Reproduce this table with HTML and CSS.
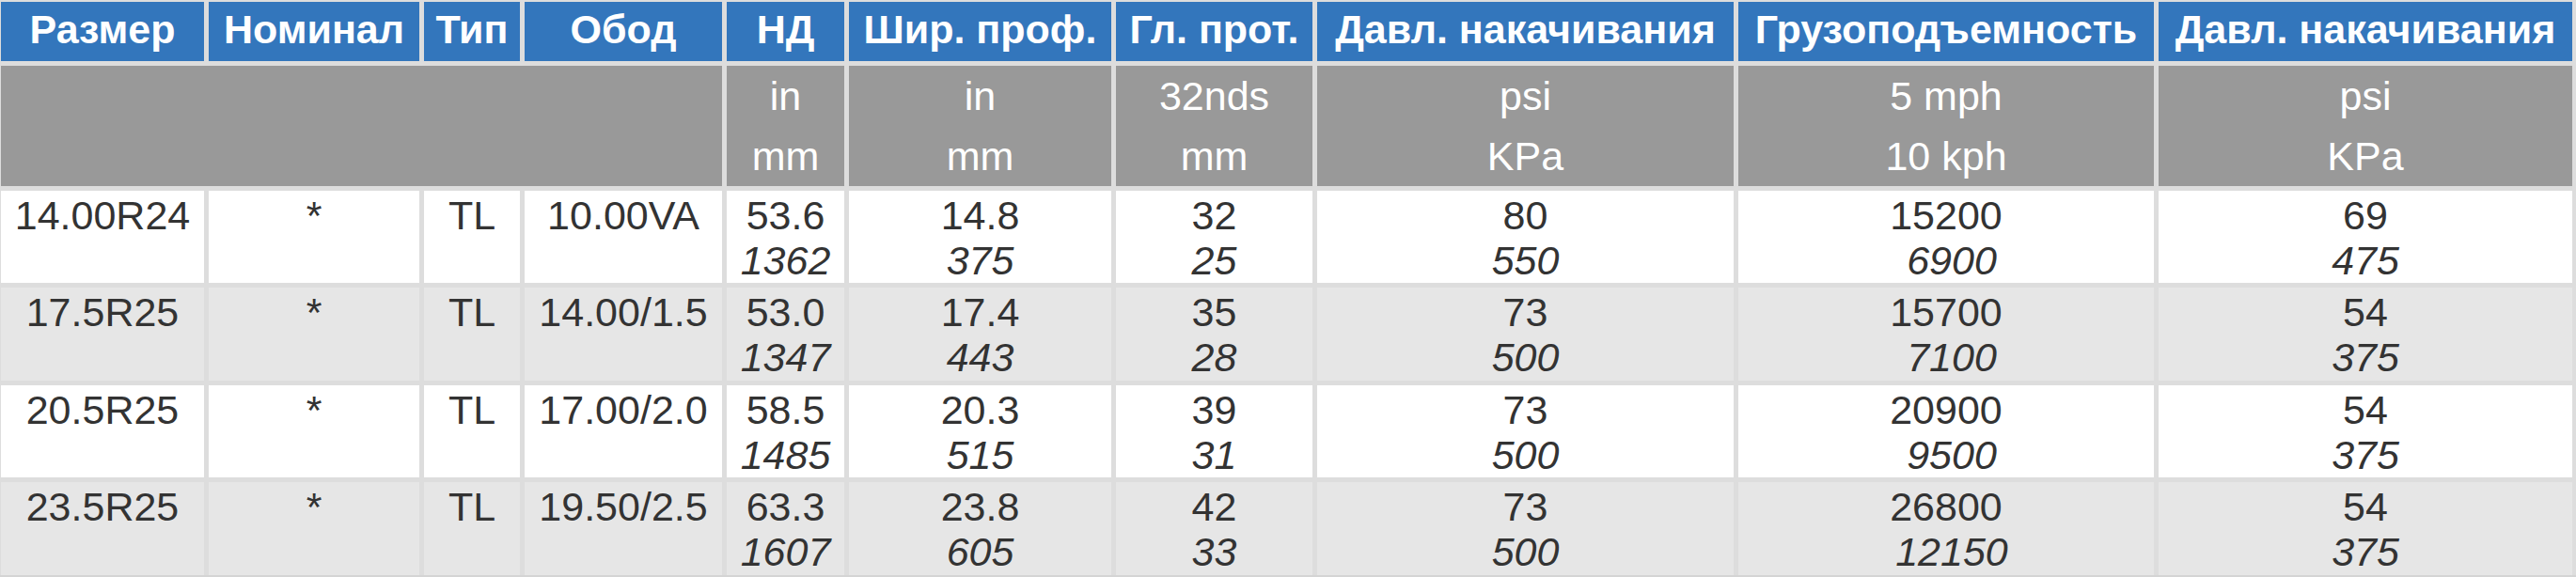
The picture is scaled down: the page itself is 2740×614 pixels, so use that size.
FILE: index.html
```html
<!DOCTYPE html>
<html lang="ru">
<head>
<meta charset="utf-8">
<title>Таблица шин</title>
<link rel="stylesheet" href="styles.css">
</head>
<body>
<div class="tbl" role="table">
  <div class="th" role="columnheader">Размер</div>
  <div class="th" role="columnheader">Номинал</div>
  <div class="th" role="columnheader">Тип</div>
  <div class="th" role="columnheader">Обод</div>
  <div class="th" role="columnheader">НД</div>
  <div class="th" role="columnheader">Шир. проф.</div>
  <div class="th" role="columnheader">Гл. прот.</div>
  <div class="th" role="columnheader">Давл. накачивания</div>
  <div class="th" role="columnheader">Грузоподъемность</div>
  <div class="th" role="columnheader">Давл. накачивания</div>

  <div class="unit span4"></div>
  <div class="unit"><span class="l">in</span><span class="l">mm</span></div>
  <div class="unit"><span class="l">in</span><span class="l">mm</span></div>
  <div class="unit"><span class="l">32nds</span><span class="l">mm</span></div>
  <div class="unit"><span class="l">psi</span><span class="l">KPa</span></div>
  <div class="unit"><span class="l">5 mph</span><span class="l">10 kph</span></div>
  <div class="unit"><span class="l">psi</span><span class="l">KPa</span></div>

  <div class="td">14.00R24</div>
  <div class="td">*</div>
  <div class="td">TL</div>
  <div class="td">10.00VA</div>
  <div class="td"><span class="v">53.6</span><span class="m">1362</span></div>
  <div class="td"><span class="v">14.8</span><span class="m">375</span></div>
  <div class="td"><span class="v">32</span><span class="m">25</span></div>
  <div class="td"><span class="v">80</span><span class="m">550</span></div>
  <div class="td"><span class="v">15200</span><span class="m">&nbsp;6900</span></div>
  <div class="td"><span class="v">69</span><span class="m">475</span></div>

  <div class="td alt">17.5R25</div>
  <div class="td alt">*</div>
  <div class="td alt">TL</div>
  <div class="td alt">14.00/1.5</div>
  <div class="td alt"><span class="v">53.0</span><span class="m">1347</span></div>
  <div class="td alt"><span class="v">17.4</span><span class="m">443</span></div>
  <div class="td alt"><span class="v">35</span><span class="m">28</span></div>
  <div class="td alt"><span class="v">73</span><span class="m">500</span></div>
  <div class="td alt"><span class="v">15700</span><span class="m">&nbsp;7100</span></div>
  <div class="td alt"><span class="v">54</span><span class="m">375</span></div>

  <div class="td">20.5R25</div>
  <div class="td">*</div>
  <div class="td">TL</div>
  <div class="td">17.00/2.0</div>
  <div class="td"><span class="v">58.5</span><span class="m">1485</span></div>
  <div class="td"><span class="v">20.3</span><span class="m">515</span></div>
  <div class="td"><span class="v">39</span><span class="m">31</span></div>
  <div class="td"><span class="v">73</span><span class="m">500</span></div>
  <div class="td"><span class="v">20900</span><span class="m">&nbsp;9500</span></div>
  <div class="td"><span class="v">54</span><span class="m">375</span></div>

  <div class="td alt">23.5R25</div>
  <div class="td alt">*</div>
  <div class="td alt">TL</div>
  <div class="td alt">19.50/2.5</div>
  <div class="td alt"><span class="v">63.3</span><span class="m">1607</span></div>
  <div class="td alt"><span class="v">23.8</span><span class="m">605</span></div>
  <div class="td alt"><span class="v">42</span><span class="m">33</span></div>
  <div class="td alt"><span class="v">73</span><span class="m">500</span></div>
  <div class="td alt"><span class="v">26800</span><span class="m">&nbsp;12150</span></div>
  <div class="td alt"><span class="v">54</span><span class="m">375</span></div>
</div>
</body>
</html>
```
FILE: styles.css
```css
html, body {
  margin: 0;
  padding: 0;
  background: #d4d4d4;
}

body {
  font-family: "Liberation Sans", Arial, sans-serif;
  width: 2740px;
  height: 614px;
  overflow: hidden;
}

.tbl {
  display: grid;
  grid-template-columns: 216px 224px 102px 210px 125px 279px 209px 443px 442px 440px;
  grid-template-rows: 63px 128px 98px 99px 98px 99px;
  gap: 5px;
  padding: 2px 4px 0 1px;
  background: #dddddd;
  height: 612px;
  box-sizing: border-box;
}

.th {
  background: #3376bc;
  color: #ffffff;
  font-weight: bold;
  font-size: 43px;
  line-height: 59px;
  padding-bottom: 4px;
  text-align: center;
  white-space: nowrap;
  overflow: hidden;
}

.unit {
  background: #999999;
  color: #ffffff;
  font-size: 43px;
  line-height: 64px;
  text-align: center;
  white-space: nowrap;
}

.span4 {
  grid-column: span 4;
}

.l {
  display: block;
}

.td {
  background: #ffffff;
  color: #333333;
  font-size: 43px;
  line-height: 48px;
  padding-top: 2px;
  text-align: center;
  white-space: nowrap;
  overflow: hidden;
}

.td.alt {
  background: #e6e6e6;
}

.v {
  display: block;
}

.m {
  display: block;
  font-style: italic;
}
```
